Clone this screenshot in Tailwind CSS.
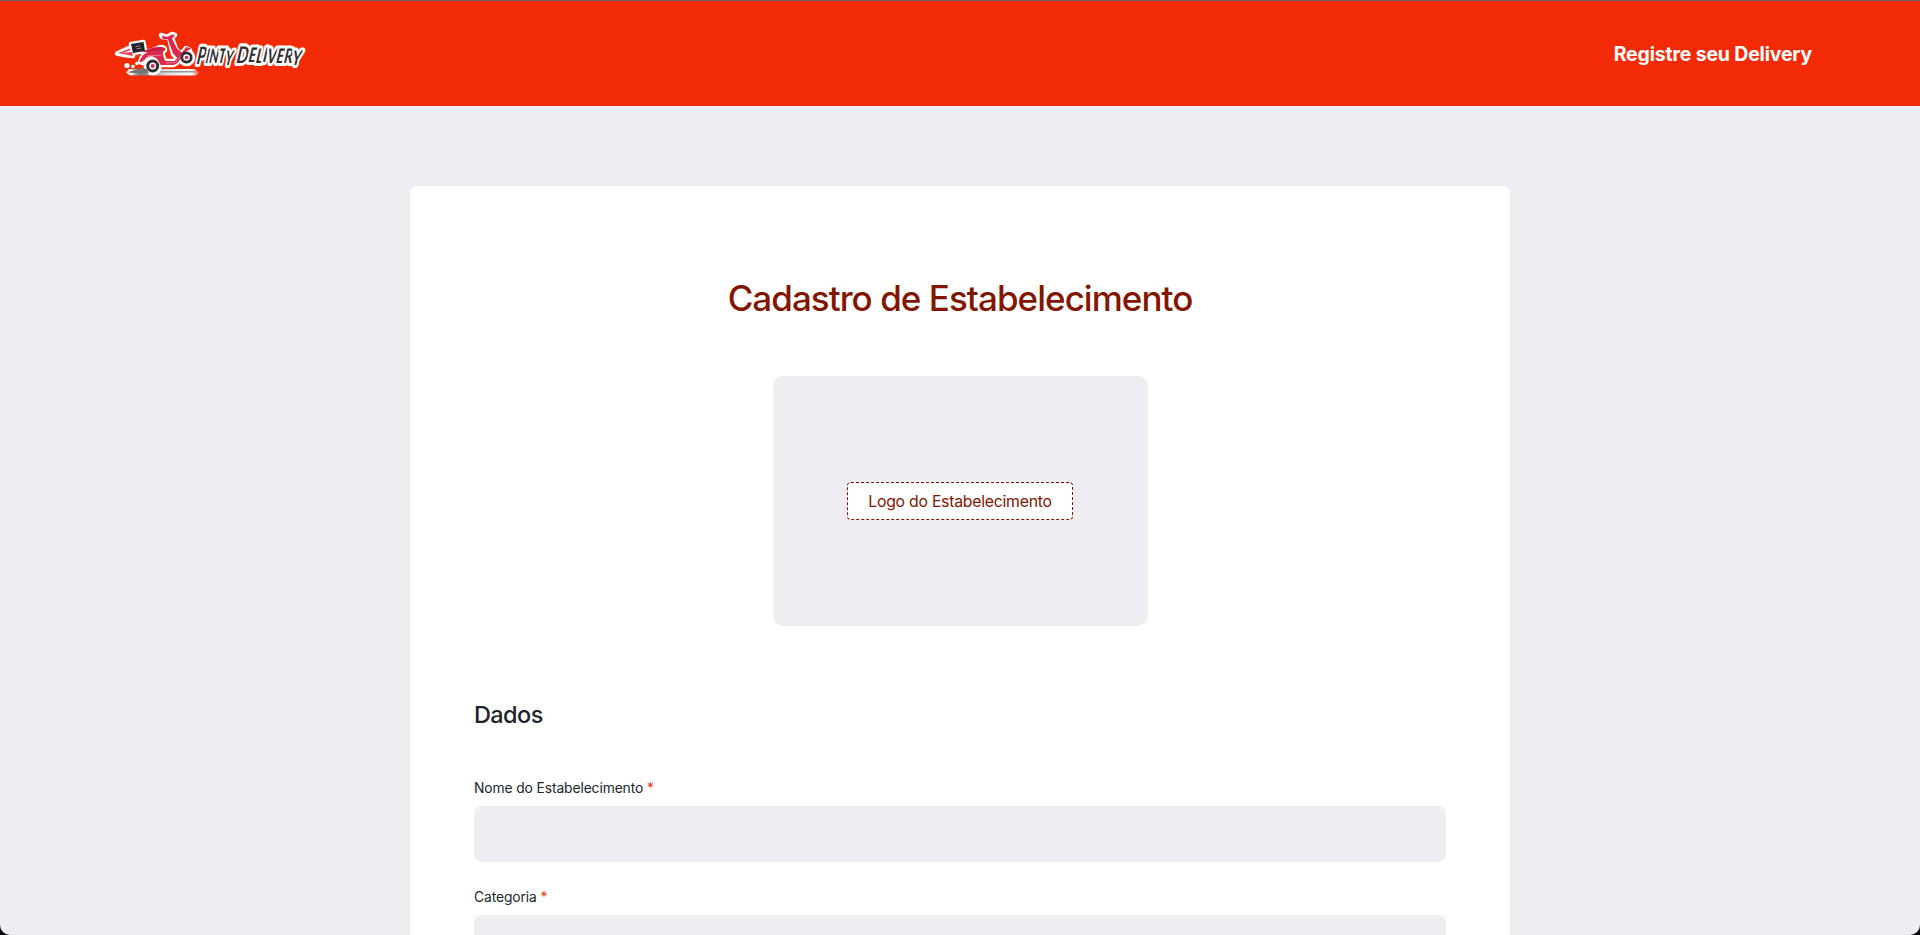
<!DOCTYPE html>
<html lang="pt-BR">
<head>
<meta charset="utf-8">
<title>Pinty Delivery</title>
<script src="https://cdn.jsdelivr.net/npm/@tailwindcss/browser@4"></script>
</head>
<body class="bg-black font-['Inter',sans-serif] text-[#212529]">
<div class="flex h-[935px] flex-col overflow-hidden rounded-b-[10px] bg-[#eeedf2]">
  <header class="flex h-[106px] shrink-0 items-center justify-between border-t border-[#64606f] bg-[#f22b06] pl-[110px] pr-[108px]">
    <svg class="h-[53px] w-[220px]" viewBox="109 27 220 53" role="img" aria-label="Pinty Delivery">
      <defs>
        <linearGradient id="road" x1="0" x2="1"><stop offset="0" stop-color="#fff"/><stop offset=".2" stop-color="#777"/><stop offset=".55" stop-color="#ddd"/><stop offset=".9" stop-color="#fff"/><stop offset="1" stop-color="#fff" stop-opacity=".2"/></linearGradient>
        <g id="moto" stroke-linejoin="round" stroke-linecap="round">
          <path d="M116 53.500 130 47l1 2-12 4.500 13-1.500v4l-9-1Z"/>
          <path d="m130 44 12.500-2 1.500 9-12 2Z"/>
          <path d="M139 62c2-8 7-11 13-12l7-3c3 0 5 1 5 3-1 2-3 2-3 3l3 8h10l11-13 4 2c-3 2-6 3-8 6l-5 7-3 2h-13l-2-4c-4-5-10-5-13-1l-3 3Z"/>
          <path d="m160 35 6 2 5-3 3 1-3 3 4 11 6 6-4 5-5-6-4-16-7-1Z"/>
          <circle cx="151.700" cy="66" r="7"/><circle cx="185.500" cy="57.500" r="6.500"/>
        </g>
      </defs>
      <path d="M128 69h66l4 4-3 2.500h-66l-4-3Z" fill="url(#road)"/>
      <circle cx="126" cy="65.500" r="2.600" fill="#fff"/><circle cx="132" cy="66.500" r="1.800" fill="#fff"/><circle cx="136" cy="63.500" r="1.800" fill="#fff"/><circle cx="130.500" cy="72" r="2.600" fill="#fff"/>
      <use href="#moto" fill="#fff" stroke="#fff" stroke-width="4.500"/>
      <path d="m127 72 14-4 5 1 2 4h-18Z" fill="#777"/>
      <path d="M159 71h35l1 1.500h-36Z" fill="#999"/>
      <path d="m117 53 12-4.500.5 1.500-8 3 10-1v4l-9-2Z" fill="#ef3b52"/>
      <path d="m130 44 12.500-2 1.500 9-12 2Z" fill="#242225"/>
      <path d="m134.500 46.500 4.500-.7m-3.500 3 5-.8" stroke="#aaa" stroke-width=".8"/>
      <path d="M141 52c5-3 11-5 18-5 4 0 6 1 5 3s-5 2-9 2Z" fill="#c91e43"/>
      <path d="M138.500 62c2-8 8-11 15-11l9-1c-1 3-1 6 2 11h9l12-14 5 1.500c-5 2-8 5-9 7.500l-5 7-4 2h-13l-2-4c-4-6-11-6-14-1l-3 2Z" fill="#dc294d"/>
      <path d="m160.500 35.500 5.500 1.500 5-2.500 3 1-3 3 5 10 6 5-5 5-5-5-5-14-5-.5Z" fill="#dc294d"/>
      <path d="m146 56 14-1m5 8 9-.5 8-9" fill="none" stroke="#f7a9b7" stroke-width=".7"/>
      <circle cx="151.700" cy="66" r="5" fill="#fff" stroke="#302b2e" stroke-width="3"/><circle cx="151.700" cy="66" r="2" fill="#dc294d"/>
      <circle cx="185.500" cy="57.500" r="4.700" fill="#fff" stroke="#302b2e" stroke-width="2.800"/><circle cx="185.500" cy="57.500" r="1.800" fill="#dc294d"/>
      <g font-family="Lato, sans-serif" font-style="italic" font-weight="700" fill="#302b2e" stroke="#fff" stroke-width="6" stroke-linejoin="round" paint-order="stroke" transform="translate(0 62.500) skewX(-8)">
        <text x="195.500" y="0" dy="1 -1 0 0 2" font-size="24" textLength="36" lengthAdjust="spacingAndGlyphs">P<tspan font-size="20">INTY</tspan></text>
        <text x="235" y="0" dy="0 -1 1 -1 1 0 0 2" font-size="23" textLength="64.500" lengthAdjust="spacingAndGlyphs">D<tspan font-size="20">ELIVERY</tspan></text>
      </g>
    </svg>
    <a class="pt-0.5 text-[19.500px] font-bold tracking-[-0.180px] text-white">Registre seu Delivery</a>
  </header>
  <main class="mx-auto mt-20 flex h-[1100px] w-[1100px] shrink-0 flex-col rounded-lg bg-white px-16 pt-[90px]">
    <h1 class="text-center text-[35px] leading-[44px] font-medium tracking-[-0.960px] text-[#821600]">Cadastro de Estabelecimento</h1>
    <div class="mx-auto mt-14 flex h-[250px] w-[375px] items-center justify-center rounded-[10px] bg-[#eeedf2]">
      <button class="h-[38px] w-[226px] rounded border border-dashed border-[#821600] bg-white pt-px text-[15.800px] tracking-[-0.250px] whitespace-nowrap text-[#821600]">Logo do Estabelecimento</button>
    </div>
    <h2 class="mt-[75px] text-[23.500px] leading-7 font-medium tracking-[-0.600px]">Dados</h2>
    <label class="mt-[49px] text-[13.800px] leading-5 tracking-[-0.090px]">Nome do Estabelecimento <span class="text-[#f22b06]">*</span></label>
    <input class="mt-2 h-14 w-full rounded-lg bg-[#eeedf2]">
    <label class="mt-[25px] text-[13.800px] leading-5 tracking-[-0.090px]">Categoria <span class="text-[#f22b06]">*</span></label>
    <input class="mt-2 h-14 w-full rounded-lg bg-[#eeedf2]">
  </main>
</div>
</body>
</html>
